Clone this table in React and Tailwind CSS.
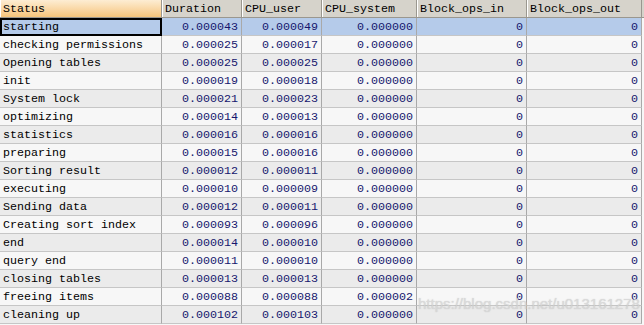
import React from 'react';

const columns = [
  { key: 'status', label: 'Status', width: 'w-[162px]', align: 'text-left' },
  { key: 'duration', label: 'Duration', width: 'w-[80px]', align: 'text-right' },
  { key: 'user', label: 'CPU_user', width: 'w-[80px]', align: 'text-right' },
  { key: 'system', label: 'CPU_system', width: 'w-[95px]', align: 'text-right' },
  { key: 'in', label: 'Block_ops_in', width: 'w-[110px]', align: 'text-right' },
  { key: 'out', label: 'Block_ops_out', width: 'w-[115px]', align: 'text-right' },
];

const rows = [
  ['starting', '0.000043', '0.000049', '0.000000', '0', '0'],
  ['checking permissions', '0.000025', '0.000017', '0.000000', '0', '0'],
  ['Opening tables', '0.000025', '0.000025', '0.000000', '0', '0'],
  ['init', '0.000019', '0.000018', '0.000000', '0', '0'],
  ['System lock', '0.000021', '0.000023', '0.000000', '0', '0'],
  ['optimizing', '0.000014', '0.000013', '0.000000', '0', '0'],
  ['statistics', '0.000016', '0.000016', '0.000000', '0', '0'],
  ['preparing', '0.000015', '0.000016', '0.000000', '0', '0'],
  ['Sorting result', '0.000012', '0.000011', '0.000000', '0', '0'],
  ['executing', '0.000010', '0.000009', '0.000000', '0', '0'],
  ['Sending data', '0.000012', '0.000011', '0.000000', '0', '0'],
  ['Creating sort index', '0.000093', '0.000096', '0.000000', '0', '0'],
  ['end', '0.000014', '0.000010', '0.000000', '0', '0'],
  ['query end', '0.000011', '0.000010', '0.000000', '0', '0'],
  ['closing tables', '0.000013', '0.000013', '0.000000', '0', '0'],
  ['freeing items', '0.000088', '0.000088', '0.000002', '0', '0'],
  ['cleaning up', '0.000102', '0.000103', '0.000000', '0', '0'],
];

export default function App() {
  return (
    <div className="relative w-[644px] h-[325px] overflow-hidden bg-[#f7f7f7] font-['Liberation_Mono',monospace] text-[11.67px]">
      {/* header */}
      <div className="flex h-[18px] border-b border-[#9a978f] leading-[18px]">
        {columns.map((c, i) => (
          <div
            key={c.key}
            className={`${c.width} shrink-0 h-[17px] border-r border-[#9a978f] border-l border-l-white px-[2px] text-black whitespace-nowrap ${
              i === 0
                ? 'bg-gradient-to-b from-[#fdedd3] to-[#f5c47a]'
                : 'bg-[#d6d3cb]'
            }`}
          >
            {c.label}
          </div>
        ))}
        <div className="flex-1 bg-[#d6d3cb]" />
      </div>

      {/* body */}
      {rows.map((r, ri) => {
        const selected = ri === 0;
        const bg = selected ? 'bg-[#b5cbea]' : ri % 2 === 0 ? 'bg-[#ebebeb]' : 'bg-[#f7f7f7]';
        return (
          <div key={ri} className={`flex h-[18px] ${bg}`}>
            {r.map((v, ci) => {
              const c = columns[ci];
              const focus = selected && ci === 0;
              return (
                <div
                  key={ci}
                  className={`${c.width} shrink-0 h-[18px] whitespace-nowrap ${c.align} ${
                    focus
                      ? 'border-2 border-black pl-[1px] leading-[15px] text-black'
                      : `border-r border-b border-r-[#a9a9a9] border-b-[#c6c6c6] leading-[18px] ${
                          ci === 0 ? 'pl-[3px] text-black' : 'pr-[3px] text-[#16166e]'
                        }`
                  }`}
                >
                  {v}
                </div>
              );
            })}
            <div className="flex-1 bg-[#f7f7f7]" />
          </div>
        );
      })}

      {/* watermark */}
      <div className="absolute left-[418px] top-[295px] font-['Liberation_Sans',sans-serif] text-[15px] leading-[18px] text-[#d4d4d4] opacity-80 [text-shadow:0_0_1px_rgba(150,150,150,0.5)] pointer-events-none whitespace-nowrap">
        https://blog.csdn.net/u013161278
      </div>
    </div>
  );
}
